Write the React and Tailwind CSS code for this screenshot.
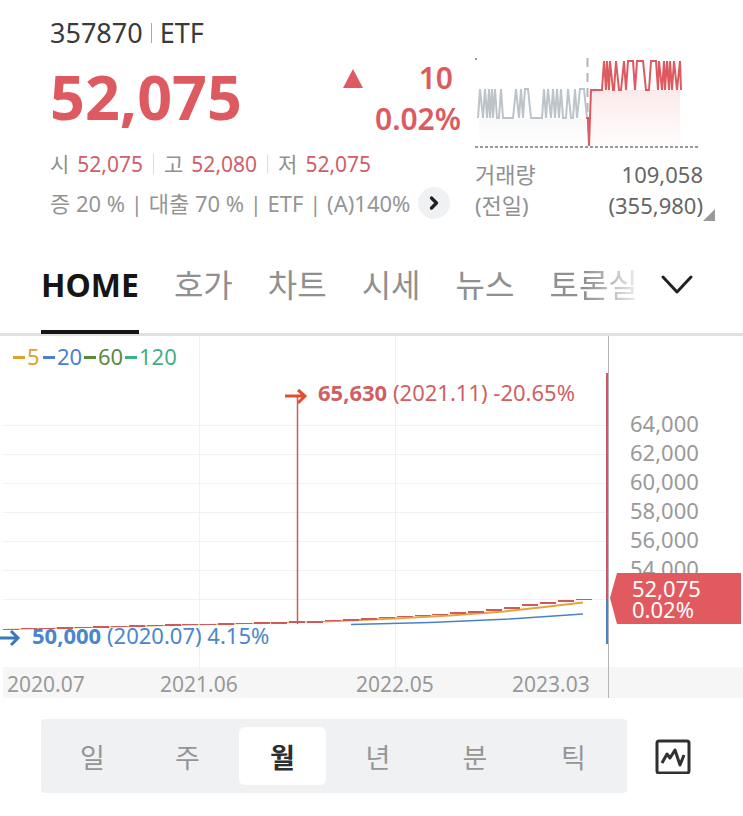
import React from "react";
import { ChevronRight } from "lucide-react";

const tabs = ["HOME", "호가", "차트", "시세", "뉴스", "토론실"];
const periods = ["일", "주", "월", "년", "분", "틱"];

const prices = [
    { label: "시", value: "52,075" },
    { label: "고", value: "52,080" },
    { label: "저", value: "52,075" },
];

const axisLabels = ["64,000", "62,000", "60,000", "58,000", "56,000", "54,000"];

const averages = [
    { label: "5", color: "#e0a030", x: 13 },
    { label: "20", color: "#4a7fd0", x: 43 },
    { label: "60", color: "#5a8a3c", x: 84 },
    { label: "120", color: "#3fb086", x: 125 },
];

const dates = [
    { label: "2020.07", x: 7 },
    { label: "2021.06", x: 160 },
    { label: "2022.05", x: 356 },
    { label: "2023.03", x: 512 },
];

// Monthly candles: [x, y, height]
const candles = [
    [3, 293, 1], [21, 292, 1], [39, 292, 1], [57, 291, 2], [75, 291, 1], [93, 290, 2],
    [111, 290, 1], [129, 289, 2], [147, 289, 1], [165, 288, 2], [182, 288, 1], [200, 288, 1],
    [218, 287, 2], [236, 287, 1], [254, 286, 2], [271, 286, 2], [289, 285, 2], [307, 285, 2],
    [325, 284, 1], [343, 283, 2], [361, 282, 2], [379, 281, 1], [397, 280, 1], [415, 279, 1],
    [432, 278, 1], [450, 276, 2], [468, 275, 2], [486, 273, 2], [504, 271, 2], [522, 268, 2],
    [540, 266, 2], [558, 264, 2], [576, 263, 1],
];

const MiniChart = () => (
    <svg viewBox="0 0 228 96" className="w-full" aria-hidden="true">
        <defs>
            <linearGradient id="riseFill" x1="0" y1="0" x2="0" y2="1">
                <stop offset="0" stopColor="#e05a60" stopOpacity="0.13" />
                <stop offset="1" stopColor="#e05a60" stopOpacity="0.01" />
            </linearGradient>
            <linearGradient id="flatFill" x1="0" y1="0" x2="0" y2="1">
                <stop offset="0" stopColor="#b8bec4" stopOpacity="0.1" />
                <stop offset="1" stopColor="#b8bec4" stopOpacity="0" />
            </linearGradient>
        </defs>
        <rect x="4" y="64" width="108" height="28" fill="url(#flatFill)" />
        <rect x="115" y="35" width="90" height="56" fill="url(#riseFill)" />
        <rect x="0" y="3" width="2" height="2" fill="#999" />
        <path d="M112.500 3v60" stroke="#b5b5b5" strokeWidth="2" strokeDasharray="9 6" />
        <path
            d="M3 63L5 34L8 63L10 34L12 63L14 34L15 63L17 34L18 63L20 34L22 63H24L26 34L28 63H38L41 34L44 63L46 34L48 63L50 34H53L56 63H67L69 34L71 63L73 34L76 63L78 34L80 63L82 34L84 63L86 34L88 63H91L93 34L96 63H98L100 34L102 63L105 34H109L112 63"
            fill="none"
            stroke="#bdc4c9"
            strokeWidth="2"
        />
        <path
            d="M111 63H113L114 91L116 35H127L129 6L131 35L132 6L134 35L135 6L138 35H139L141 6L144 35H146L149 6L151 35L153 6H158L160 35L162 6H168L171 35H174L176 6H181L183 35L184 6L187 35L189 6L190 35L192 6L194 35L195 6L197 35L199 6L202 35L205 6L206 35"
            fill="none"
            stroke="#dd5a60"
            strokeWidth="2"
        />
        <path d="M112 64h3v16h-2z" fill="#dd5a60" />
        <path d="M0 92h225" stroke="#999" strokeWidth="2" strokeDasharray="3 2" />
    </svg>
);

const StockHeader = () => (
    <header className="flex pl-[50px] pr-10 pt-4">
        <div className="flex-1">
            <div className="flex items-center gap-2 text-[27px] leading-[34px] text-[#3a3a3a]">
                <span>357870</span>
                <span className="h-5 w-px bg-[#aaa]" />
                <span>ETF</span>
            </div>

            <div className="flex h-24 items-center justify-between pr-[14px] text-[#dd5a60]">
                <strong className="pb-1 text-[61px] font-bold leading-none">52,075</strong>
                <div className="grid grid-cols-[20px_auto] justify-end gap-x-3 text-right text-[30px] font-semibold leading-[41px]">
                    <svg viewBox="0 0 20 20" className="w-5 self-center" aria-label="상승">
                        <path d="M10 1L20 20H0z" fill="currentColor" />
                    </svg>
                    <span className="pr-2">10</span>
                    <span className="col-start-2">0.02%</span>
                </div>
            </div>

            <div className="flex items-center text-[21px] leading-[36px]">
                {prices.map((price, i) => (
                    <React.Fragment key={price.label}>
                        {i > 0 && <span className="mx-[10px] h-5 w-px bg-[#ddd]" />}
                        <span className="mr-2 text-[#909090]">{price.label}</span>
                        <span className="text-[#d06068]">{price.value}</span>
                    </React.Fragment>
                ))}
            </div>

            <div className="flex items-center gap-2 text-[22px] leading-[42px] text-[#959595]">
                <span className="whitespace-nowrap">증 20 % | 대출 70 % | ETF | (A)140%</span>
                <button aria-label="상세" className="flex h-8 w-8 items-center justify-center rounded-full bg-[#f0f1f3] text-[#222]">
                    <ChevronRight size={20} strokeWidth={4} />
                </button>
            </div>
        </div>

        <div className="w-[228px] pt-[39px]">
            <MiniChart />
            <dl className="grid grid-cols-2 pt-2 text-[22px] leading-[31px] text-[#666]">
                <dt className="text-[#909090]">거래량</dt>
                <dd className="text-right">109,058</dd>
                <dt className="text-[#909090]">(전일)</dt>
                <dd className="relative text-right">
                    (355,980)
                    <svg viewBox="0 0 12 12" className="absolute -right-3 bottom-0 w-3" aria-hidden="true">
                        <path d="M12 0V12H0z" fill="#999" />
                    </svg>
                </dd>
            </dl>
        </div>
    </header>
);

const Tabs = () => (
    <nav className="flex h-28 items-stretch border-b-[3px] border-[#dfe0e2] pl-[41px] pr-[50px]">
        <div className="flex flex-1 gap-[35px] whitespace-nowrap text-[32px]">
            {tabs.map((tab, i) => (
                <button
                    key={tab}
                    className={
                        i === 0
                            ? "-mb-px border-b-4 border-[#151515] pt-4 font-bold text-[#151515]"
                            : i === tabs.length - 1
                                ? "bg-linear-to-r from-[#909090] from-40% to-[#eee] bg-clip-text pt-3 text-transparent"
                                : "pt-3 text-[#909090]"
                    }
                >
                    {tab}
                </button>
            ))}
        </div>
        <button aria-label="더보기" className="pt-3 text-[#222]">
            <svg viewBox="0 0 32 20" className="w-8" fill="none" stroke="currentColor" strokeWidth="3">
                <path d="M2 2L16 17L30 2" strokeLinejoin="round" strokeLinecap="round" />
            </svg>
        </button>
    </nav>
);

const PriceChart = () => (
    <svg viewBox="0 0 743 363" className="block w-full" role="img" aria-label="월봉 차트">
        <rect x="3" y="331" width="740" height="31" fill="#f6f6f6" />
        <g stroke="#f1f1f1">
            {[89, 118, 147, 176, 205, 234, 263].map((y) => (
                <path key={y} d={`M3 ${y + 0.5}H606`} />
            ))}
            <path d="M199.500 0V362M395.500 0V362" />
        </g>

        <g fontSize="22">
            {averages.map((avg) => (
                <g key={avg.label} fill={avg.color}>
                    <rect x={avg.x} y="20" width="12" height="3" />
                    <text x={avg.x + 14} y="29">{avg.label}</text>
                </g>
            ))}
        </g>

        <path d="M3 293.500L150 290L325 285.500" fill="none" stroke="#e8a33c" />
        <path d="M325 285.500L395 282.500L450 279.500L504 275.500L540 271.500L583 266.500" fill="none" stroke="#e8a33c" strokeWidth="2" />
        <path d="M351 288.500L430 286.500L510 283L583 278" fill="none" stroke="#4a82c4" strokeWidth="1.500" />
        {candles.map(([x, y, h]) => (
            <rect key={x} x={x} y={y} width="16" height={h} fill="#d05a5a" />
        ))}
        <path d="M297.500 61V288" stroke="#cc5a5e" strokeWidth="1.500" />

        <path d="M608.500 0V362" stroke="#b5b5b5" />
        <path d="M607 37V263" stroke="#cc5a66" strokeWidth="2" />
        <path d="M607 263V308" stroke="#4a82c4" strokeWidth="2" />

        <g fill="none" strokeWidth="3">
            <path d="M285 60H304M298 54L305 60L298 67" stroke="#e05030" />
            <path d="M0 302H18M11 295L18 302L11 309" stroke="#3a78b8" />
        </g>
        <g fontSize="22" fill="#cf5f63">
            <text x="318" y="65" fontWeight="700">65,630</text>
            <text x="393" y="65">(2021.11) -20.65%</text>
        </g>
        <g fontSize="22" fill="#4a86cc">
            <text x="32" y="308" fontWeight="700">50,000</text>
            <text x="107" y="308">(2020.07) 4.15%</text>
        </g>

        <g fontSize="22" fill="#999">
            {axisLabels.map((label, i) => (
                <text key={label} x="630" y={96 + i * 29}>{label}</text>
            ))}
        </g>
        <path d="M610 262L617 237H741V288H617z" fill="#e05a60" />
        <g fontSize="22" fill="#fff">
            <text x="632" y="261">52,075</text>
            <text x="632" y="282">0.02%</text>
        </g>

        <g fontSize="21" fill="#999">
            {dates.map((date) => (
                <text key={date.label} x={date.x} y="356">{date.label}</text>
            ))}
        </g>
    </svg>
);

const PeriodBar = () => (
    <div className="flex items-center gap-7 pb-[23px] pl-[41px] pr-[52px] pt-5">
        <div className="grid h-[74px] flex-1 grid-cols-[95fr_95fr_95fr_96fr_98fr_99fr] rounded-sm bg-[#f0f1f3] px-1 py-2">
            {periods.map((period) => (
                <button
                    key={period}
                    className={
                        period === "월"
                            ? "mx-1 rounded-md bg-white pt-1 text-[27px] font-bold text-[#2e2e2e]"
                            : "mx-1 pt-1 text-[27px] text-[#959595]"
                    }
                >
                    {period}
                </button>
            ))}
        </div>
        <button aria-label="차트 설정" className="text-[#303030]">
            <svg viewBox="0 0 36 36" className="w-9" fill="none" stroke="currentColor" strokeWidth="3">
                <rect x="2" y="3" width="32" height="32" rx="2" />
                <path d="M7 25L12 16L15 20L20 12L25 27L29 17" strokeLinejoin="round" />
            </svg>
        </button>
    </div>
);

export default function App() {
    return (
        <main className="bg-white font-['Noto_Sans','Noto_Sans_CJK_KR',sans-serif]">
            <StockHeader />
            <Tabs />
            <PriceChart />
            <PeriodBar />
        </main>
    );
}
